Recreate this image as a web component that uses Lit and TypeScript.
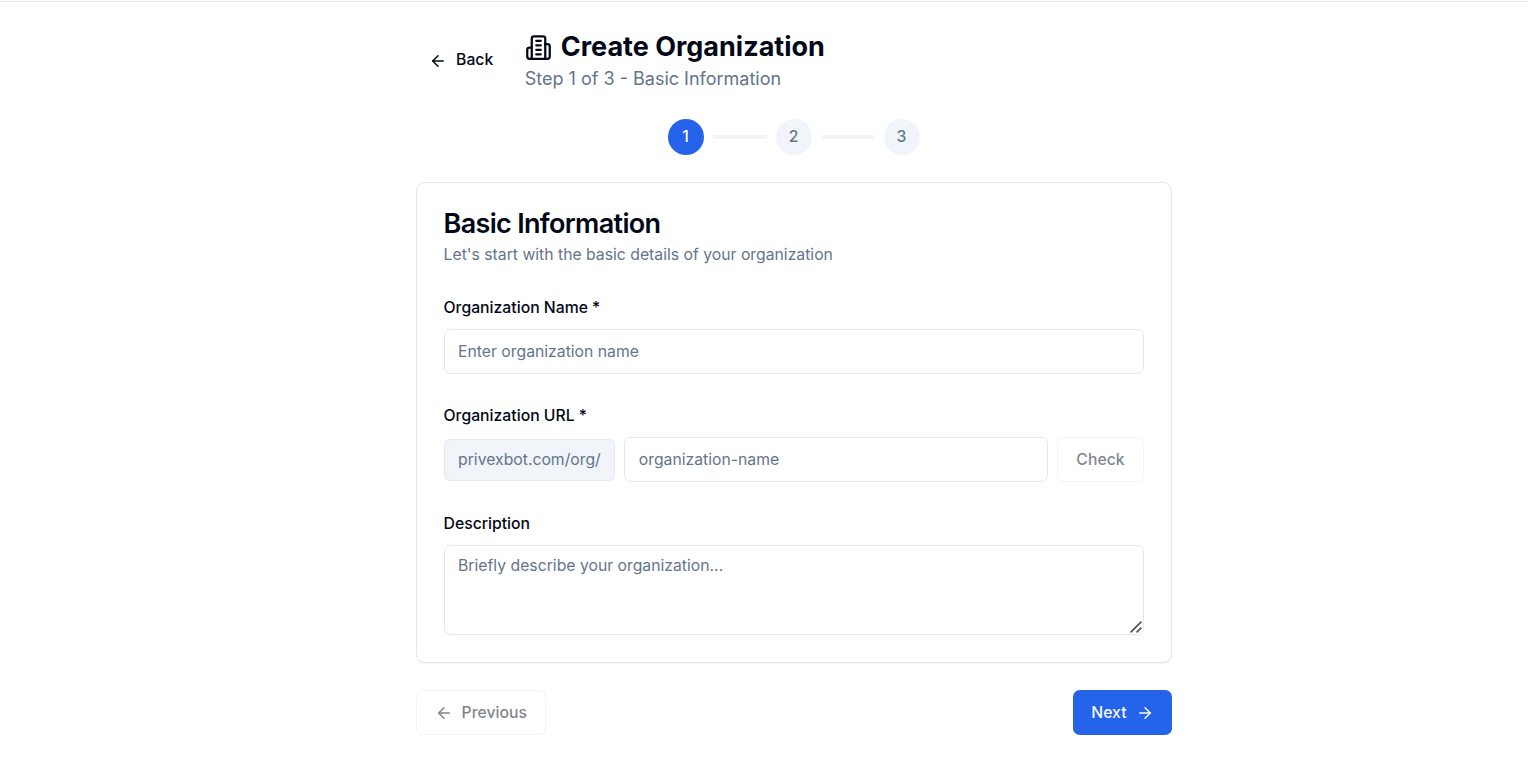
import { LitElement, html, css, svg } from "lit";
import { customElement, state } from "lit/decorators.js";

const arrowLeft = svg`<path d="m12 19-7-7 7-7"/><path d="M19 12H5"/>`;
const arrowRight = svg`<path d="M5 12h14"/><path d="m12 5 7 7-7 7"/>`;
const building = svg`
  <path d="M6 22V4a2 2 0 0 1 2-2h8a2 2 0 0 1 2 2v18Z"/>
  <path d="M6 12H4a2 2 0 0 0-2 2v6a2 2 0 0 0 2 2h2"/>
  <path d="M18 9h2a2 2 0 0 1 2 2v9a2 2 0 0 1-2 2h-2"/>
  <path d="M10 6h4"/><path d="M10 10h4"/><path d="M10 14h4"/><path d="M10 18h4"/>`;

const icon = (paths: unknown, cls = "icon") => html`
  <svg class=${cls} viewBox="0 0 24 24" fill="none" stroke="currentColor"
    stroke-width="2" stroke-linecap="round" stroke-linejoin="round" aria-hidden="true">${paths}</svg>`;

@customElement("app-root")
export class AppRoot extends LitElement {
  @state() private step = 1;

  static styles = css`
    :host {
      display: block;
      box-sizing: border-box;
      height: 781px;
      overflow: hidden;
      background: #fff;
      color: #020817;
      font-family: Inter, "Liberation Sans", sans-serif;
      font-size: 18px;
      line-height: 27px;
      padding-top: 1px;
    }
    * { box-sizing: border-box; margin: 0; }
    .shell { border-top: 1px solid #e5e7eb; padding: 27px 0 0 59.1px; }
    .page { width: 756px; margin: 0 auto; display: flex; flex-direction: column; gap: 27px; }
    .icon { width: 18px; height: 18px; flex: none; }
    .icon-lg { width: 27px; height: 27px; flex: none; }
    .header { display: flex; align-items: center; gap: 18px; }
    .heading { display: flex; align-items: center; gap: 9px; font-size: 27px; line-height: 36px; font-weight: 700; }
    .subtitle { color: #64748b; font-size: 18px; line-height: 27px; }
    .btn {
      display: inline-flex; align-items: center; justify-content: center; gap: 9px;
      height: 45px; padding: 0 18px; border: 1px solid #e2e8f0; border-radius: 6.75px;
      background: #fff; color: #020817;
      font: 500 15.75px/22.5px Inter, "Liberation Sans", sans-serif; white-space: nowrap;
    }
    .btn:disabled { opacity: 0.5; }
    .ghost { height: 40.5px; padding: 0 13.5px; border: 0; background: transparent; }
    .primary { background: #2563eb; border: 0; color: #f8fafc; }
    .steps { display: flex; align-items: center; justify-content: center; gap: 9px; }
    .dot {
      width: 36px; height: 36px; border-radius: 50%; background: #f1f5f9; color: #64748b;
      display: grid; place-items: center; font-size: 15.75px; line-height: 22.5px; font-weight: 500;
    }
    .dot.active { background: #2563eb; color: #f8fafc; }
    .bar { width: 54px; height: 4px; background: #f1f5f9; }
    .card {
      border: 1px solid #e2e8f0; border-radius: 9px; padding: 27px; background: #fff;
      box-shadow: 0 1px 2px rgba(0, 0, 0, 0.05);
      display: flex; flex-direction: column; gap: 27px;
    }
    .card-head { display: flex; flex-direction: column; gap: 6.75px; }
    .title { font-size: 27px; line-height: 27px; font-weight: 600; letter-spacing: -0.025em; }
    .desc { font-size: 15.75px; line-height: 22.5px; color: #64748b; }
    .field { display: flex; flex-direction: column; gap: 9px; }
    .label { font-size: 15.75px; line-height: 25.5px; padding-top: 1.5px; font-weight: 500; }
    .row { display: flex; align-items: center; gap: 9px; }
    .prefix {
      padding: 9px 13.5px; border: 1px solid #e2e8f0; border-radius: 6.75px;
      background: #f1f5f9; color: #64748b; font-size: 15.75px; line-height: 22.5px;
    }
    .input {
      display: block; width: 100%; min-width: 0; height: 45px; padding: 9px 13.5px;
      border: 1px solid #e2e8f0; border-radius: 6.75px; background: #fff; color: #020817;
      font: 400 15.75px/22.5px Inter, "Liberation Sans", sans-serif; outline: none;
    }
    .row .input { flex: 1; width: auto; }
    .area-wrap { position: relative; }
    .area { height: 90px; resize: none; }
    .grip { position: absolute; right: 2px; bottom: 2px; width: 12px; height: 12px; pointer-events: none; }
    .input::placeholder { color: #64748b; opacity: 1; }
    .footer { display: flex; justify-content: space-between; }
  `;

  render() {
    return html`
      <div class="shell">
        <main class="page">
          <header class="header">
            <button class="btn ghost">${icon(arrowLeft)}Back</button>
            <div>
              <h1 class="heading">${icon(building, "icon-lg")}Create Organization</h1>
              <p class="subtitle">Step ${this.step} of 3 - Basic Information</p>
            </div>
          </header>
          <nav class="steps">
            ${[1, 2, 3].map((n) => html`
              ${n > 1 ? html`<span class="bar"></span>` : ""}
              <span class="dot ${n === this.step ? "active" : ""}">${n}</span>`)}
          </nav>
          <section class="card">
            <div class="card-head">
              <h2 class="title">Basic Information</h2>
              <p class="desc">Let's start with the basic details of your organization</p>
            </div>
            <div class="field">
              <label class="label" for="name">Organization Name *</label>
              <input class="input" id="name" placeholder="Enter organization name" />
            </div>
            <div class="field">
              <label class="label" for="url">Organization URL *</label>
              <div class="row">
                <span class="prefix">privexbot.com/org/</span>
                <input class="input" id="url" placeholder="organization-name" />
                <button class="btn" disabled>Check</button>
              </div>
            </div>
            <div class="field">
              <label class="label" for="about">Description</label>
              <div class="area-wrap">
                <textarea class="input area" id="about" placeholder="Briefly describe your organization..."></textarea>
                <svg class="grip" viewBox="0 0 12 12" stroke="#505050" stroke-width="1.6" aria-hidden="true">
                  <path d="M0.6 11.4 11.4 0.6"/><path d="M6.6 11.4 11.4 6.6"/>
                </svg>
              </div>
            </div>
          </section>
          <footer class="footer">
            <button class="btn" disabled>${icon(arrowLeft)}Previous</button>
            <button class="btn primary">Next${icon(arrowRight)}</button>
          </footer>
        </main>
      </div>`;
  }
}
